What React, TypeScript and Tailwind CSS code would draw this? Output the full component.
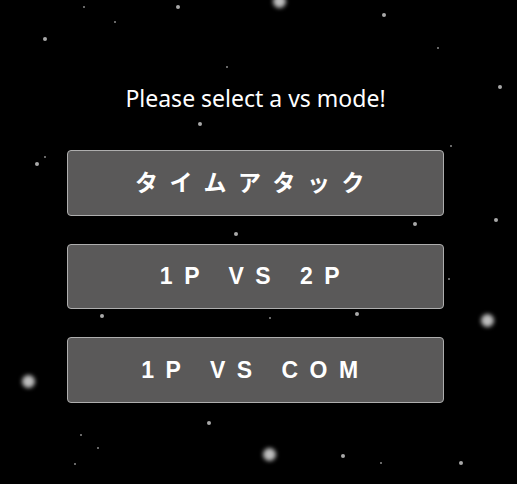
const stars: { x: number; y: number; k: "s" | "m" | "l" }[] = [
  { x: 84, y: 7, k: "s" },
  { x: 115, y: 22, k: "s" },
  { x: 438, y: 48, k: "s" },
  { x: 227, y: 67, k: "s" },
  { x: 451, y: 146, k: "s" },
  { x: 45, y: 157, k: "s" },
  { x: 449, y: 279, k: "s" },
  { x: 270, y: 318, k: "s" },
  { x: 81, y: 435, k: "s" },
  { x: 98, y: 448, k: "s" },
  { x: 75, y: 464, k: "s" },
  { x: 381, y: 463, k: "s" },
  { x: 178, y: 7, k: "m" },
  { x: 384, y: 15, k: "m" },
  { x: 45, y: 39, k: "m" },
  { x: 500, y: 87, k: "m" },
  { x: 200, y: 124, k: "m" },
  { x: 37, y: 164, k: "m" },
  { x: 496, y: 220, k: "m" },
  { x: 415, y: 224, k: "m" },
  { x: 236, y: 234, k: "m" },
  { x: 102, y: 316, k: "m" },
  { x: 357, y: 314, k: "m" },
  { x: 209, y: 423, k: "m" },
  { x: 343, y: 456, k: "m" },
  { x: 461, y: 463, k: "m" },
  { x: 279, y: 1, k: "l" },
  { x: 487, y: 320, k: "l" },
  { x: 28, y: 381, k: "l" },
  { x: 269, y: 454, k: "l" },
];

const sizes = { s: 2, m: 4, l: 13 };

const starClass = {
  s: "absolute rounded-full w-[2px] h-[2px] bg-[#8a8a8a]",
  m: "absolute rounded-full w-[4px] h-[4px] bg-[#a8a8a8] blur-[0.5px]",
  l: "absolute rounded-full w-[13px] h-[13px] bg-[#bdbdbd] blur-[2px]",
};

const modes = ["タイムアタック", "1P VS 2P", "1P VS COM"];

export default function App() {
  return (
    <div className="relative w-full h-[484px] overflow-hidden bg-black">
      {stars.map((s, i) => (
        <span
          key={i}
          className={starClass[s.k]}
          style={{ left: s.x - sizes[s.k] / 2, top: s.y - sizes[s.k] / 2 }}
        />
      ))}
      <div className="relative flex flex-col items-center pt-[82px] pr-[6px]">
        <p className="text-[23px] leading-[32px] text-white font-['Noto_Sans',sans-serif]">
          Please select a vs mode!
        </p>
        <div className="mt-[36px] flex flex-col gap-[28px]">
          {modes.map((m) => (
            <button
              key={m}
              className="w-[377px] h-[65.5px] rounded-[4px] border border-[#aeaeae] bg-[#5a5959] text-white text-[23px] font-bold tracking-[0.5em] font-['Liberation_Sans','Noto_Sans_CJK_JP',sans-serif] flex items-center justify-center"
            >
              {m}
            </button>
          ))}
        </div>
      </div>
    </div>
  );
}
